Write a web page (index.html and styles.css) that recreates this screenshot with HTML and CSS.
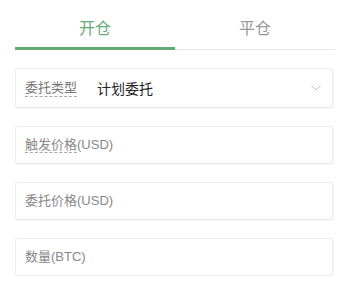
FILE: index.html
```html
<!DOCTYPE html>
<html lang="zh">
<head>
<meta charset="utf-8">
<link rel="stylesheet" href="styles.css">
</head>
<body>
<div class="panel">
  <div class="tabs">
    <div class="tab active">开仓</div>
    <div class="tab">平仓</div>
  </div>
  <div class="fields">
    <div class="field select">
      <span class="label dashed">委托类型</span>
      <span class="value">计划委托</span>
      <svg class="chev" width="10" height="6" viewBox="0 0 10 6"><path d="M0.5 0.5 L5 5 L9.5 0.5" fill="none" stroke="#c8c8c8" stroke-width="1"/></svg>
    </div>
    <div class="field">
      <span class="ph"><span class="dashed">触发价格</span>(USD)</span>
    </div>
    <div class="field">
      <span class="ph">委托价格(USD)</span>
    </div>
    <div class="field">
      <span class="ph">数量(BTC)</span>
    </div>
  </div>
</div>
</body>
</html>
```
FILE: styles.css
```css
html, body {
  margin: 0;
  padding: 0;
  background: #fff;
}
body {
  font-family: "Liberation Sans", "Noto Sans CJK SC", sans-serif;
}
.panel {
  padding-left: 15px;
  width: 320px;
}
.tabs {
  display: flex;
  height: 49px;
  border-bottom: 1px solid #e6e6e6;
}
.tab {
  flex: 1;
  text-align: center;
  font-size: 16px;
  line-height: 22px;
  padding-top: 18px;
  height: 29px;
  color: #999;
  box-sizing: content-box;
}
.tab.active {
  color: #66ab78;
  border-bottom: 3px solid #62aa74;
}
.fields {
  display: flex;
  flex-direction: column;
  gap: 18px;
  margin-top: 18px;
  width: 318px;
}
.field {
  display: flex;
  align-items: center;
  height: 38px;
  box-sizing: border-box;
  border: 1px solid #ececec;
  border-radius: 2px;
  padding-left: 9px;
  padding-right: 11px;
  box-shadow: 1px 1px 1px rgba(0,0,0,0.03);
}
.field.select {
  height: 40px;
}
.label {
  font-size: 13px;
  line-height: 16px;
  color: #777;
}
.dashed {
  border-bottom: 1px dashed #aaa;
}
.value {
  margin-left: 20px;
  font-size: 14px;
  color: #222;
  flex: 1;
}
.chev {
  display: block;
}
.ph {
  font-size: 13px;
  line-height: 16px;
  color: #888;
}
```
